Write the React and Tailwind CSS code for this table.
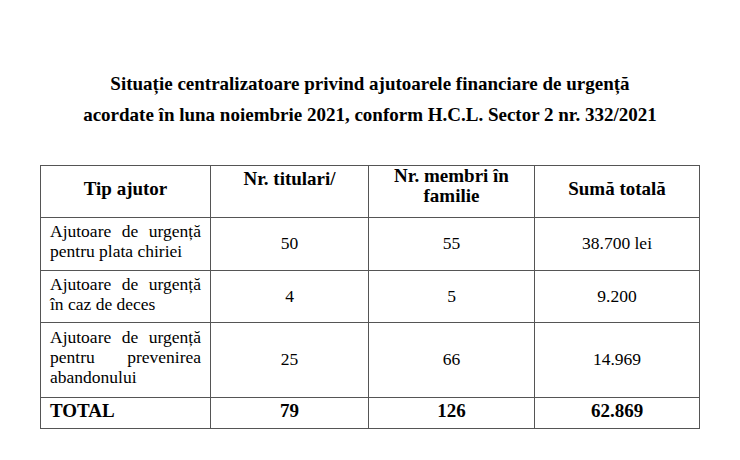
function J({ words }) {
  return (
    <div className="flex justify-between whitespace-nowrap">
      {words.map((w, i) => (
        <span key={i}>{w}</span>
      ))}
    </div>
  );
}

export default function App() {
  const cell = "border border-[#555] align-middle text-center";
  const num = cell + " pb-[2px]";
  const left = "border border-[#555] align-middle pl-[9px] pr-[9px] pb-[6px] text-left";
  return (
    <div className="w-[740px] h-[460px] bg-white text-black overflow-hidden font-['Liberation_Serif','Times_New_Roman',serif]">
      <div className="pt-[68px] flex flex-col items-center font-bold text-[19px] leading-[31px]">
        <div className="whitespace-nowrap">Situație centralizatoare privind ajutoarele financiare de urgență</div>
        <div className="whitespace-nowrap">acordate în luna noiembrie 2021, conform H.C.L. Sector 2 nr. 332/2021</div>
      </div>
      <table className="ml-[40px] mt-[35px] border-collapse text-[17.5px] leading-[20px] table-fixed w-[659px]">
        <colgroup>
          <col className="w-[170px]" />
          <col className="w-[158px]" />
          <col className="w-[166px]" />
          <col className="w-[165px]" />
        </colgroup>
        <tbody>
          <tr className="h-[52px] font-bold text-[19px]">
            <td className={cell + " pb-[6px]"}>Tip ajutor</td>
            <td className="border border-[#555] text-center align-top pt-[3px]">Nr. titulari/</td>
            <td className="border border-[#555] text-center align-top pt-0">Nr. membri în<br />familie</td>
            <td className={cell + " pb-[6px]"}>Sumă totală</td>
          </tr>
          <tr className="h-[53px]">
            <td className={left}>
              <J words={["Ajutoare", "de", "urgență"]} />
              <div className="whitespace-nowrap">pentru plata chiriei</div>
            </td>
            <td className={num}>50</td>
            <td className={num}>55</td>
            <td className={num}>38.700 lei</td>
          </tr>
          <tr className="h-[52px]">
            <td className={left}>
              <J words={["Ajutoare", "de", "urgență"]} />
              <div className="whitespace-nowrap">în caz de deces</div>
            </td>
            <td className={num}>4</td>
            <td className={num}>5</td>
            <td className={num}>9.200</td>
          </tr>
          <tr className="h-[75px]">
            <td className={left}>
              <J words={["Ajutoare", "de", "urgență"]} />
              <J words={["pentru", "prevenirea"]} />
              <div className="whitespace-nowrap">abandonului</div>
            </td>
            <td className={num}>25</td>
            <td className={num}>66</td>
            <td className={num}>14.969</td>
          </tr>
          <tr className="h-[31px] font-bold text-[19px]">
            <td className="border border-[#555] align-middle pl-[9px] pb-[4px] text-left">TOTAL</td>
            <td className={cell + " pb-[4px]"}>79</td>
            <td className={cell + " pb-[4px]"}>126</td>
            <td className={cell + " pb-[4px]"}>62.869</td>
          </tr>
        </tbody>
      </table>
    </div>
  );
}
